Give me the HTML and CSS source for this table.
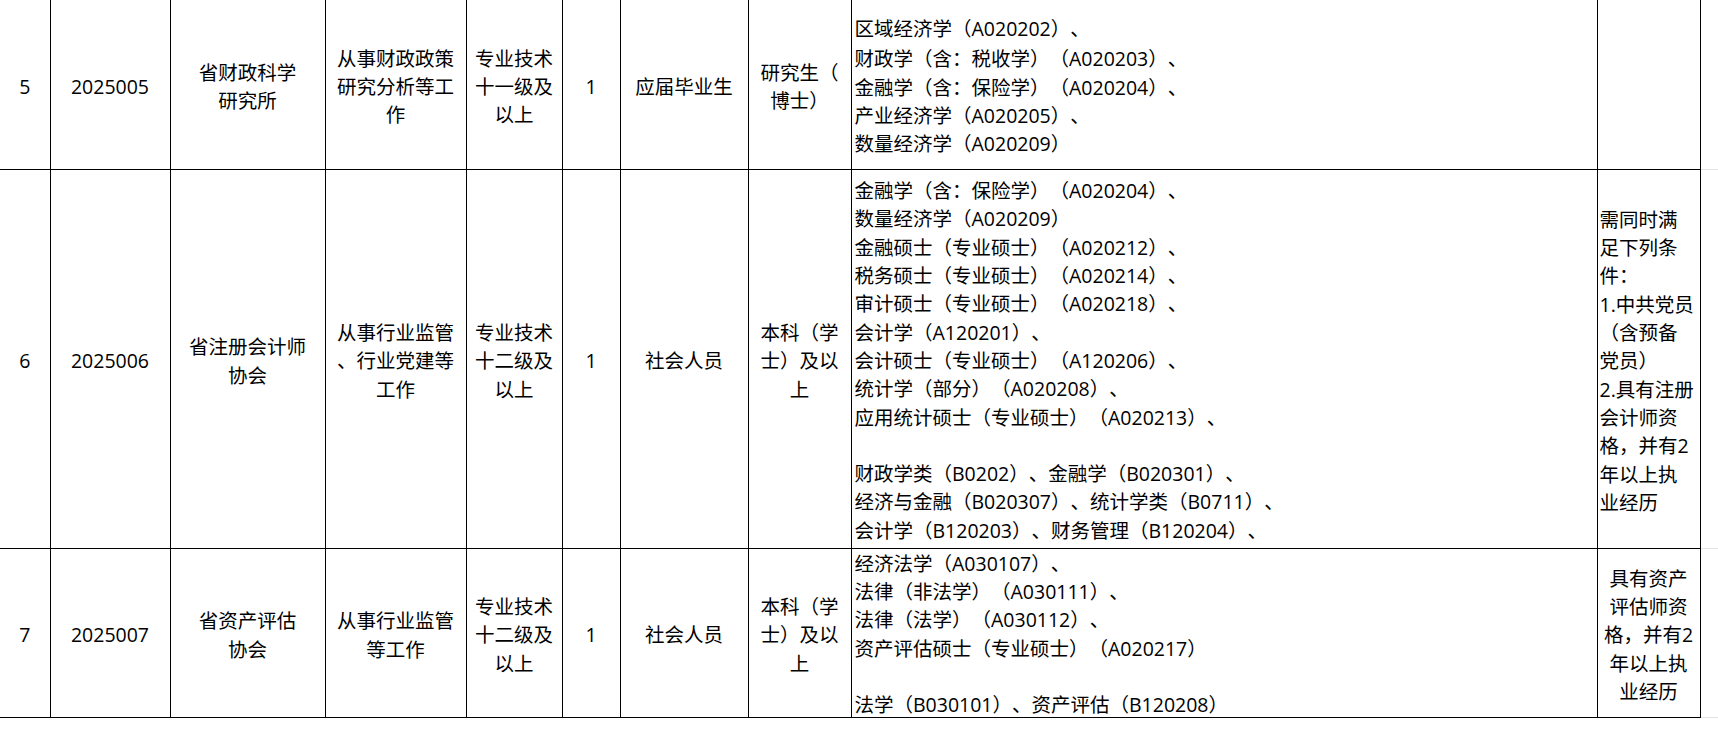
FILE: index.html
```html
<!DOCTYPE html>
<html lang="zh-CN">
<head>
<meta charset="utf-8">
<title>岗位表</title>
<link rel="stylesheet" href="styles.css">
</head>
<body>
<table class="sheet">
  <colgroup>
    <col class="c1"><col class="c2"><col class="c3"><col class="c4"><col class="c5"><col class="c6"><col class="c7"><col class="c8"><col class="c9"><col class="c10"><col class="c11">
  </colgroup>
  <tbody>
    <tr class="r5">
      <td class="ctr first">5</td>
      <td class="ctr">2025005</td>
      <td class="ctr">省财政科学<br>研究所</td>
      <td class="ctr">从事财政政策<br>研究分析等工<br>作</td>
      <td class="ctr">专业技术<br>十一级及<br>以上</td>
      <td class="ctr">1</td>
      <td class="ctr">应届毕业生</td>
      <td class="ctr">研究生（<br>博士）</td>
      <td class="major">区域经济学（A020202）、<br>财政学（含<span class="tc">：</span>税收学）（A020203）、<br>金融学（含<span class="tc">：</span>保险学）（A020204）、<br>产业经济学（A020205）、<br>数量经济学（A020209）</td>
      <td class="note"></td>
      <td class="grid"></td>
    </tr>
    <tr class="r6">
      <td class="ctr first">6</td>
      <td class="ctr">2025006</td>
      <td class="ctr">省注册会计师<br>协会</td>
      <td class="ctr">从事行业监管<br>、行业党建等<br>工作</td>
      <td class="ctr">专业技术<br>十二级及<br>以上</td>
      <td class="ctr">1</td>
      <td class="ctr">社会人员</td>
      <td class="ctr">本科（学<br>士）及以<br>上</td>
      <td class="clipcell"><div class="clip clip-bottom"><div class="lines">财政学（含<span class="tc">：</span>税收学）（A020203）、<br>金融学（含<span class="tc">：</span>保险学）（A020204）、<br>数量经济学（A020209）<br>金融硕士（专业硕士）（A020212）、<br>税务硕士（专业硕士）（A020214）、<br>审计硕士（专业硕士）（A020218）、<br>会计学（A120201）、<br>会计硕士（专业硕士）（A120206）、<br>统计学（部分）（A020208）、<br>应用统计硕士（专业硕士）（A020213）、<br><br>财政学类（B0202）、金融学（B020301）、<br>经济与金融（B020307）、统计学类（B0711）、<br>会计学（B120203）、财务管理（B120204）、</div></div></td>
      <td class="note left">需同时满<br>足下列条<br>件：<br>1.中共党员<br>（含预备<br>党员）<br>2.具有注册<br>会计师资<br>格，并有2<br>年以上执<br>业经历</td>
      <td class="grid"></td>
    </tr>
    <tr class="r7">
      <td class="ctr first">7</td>
      <td class="ctr">2025007</td>
      <td class="ctr">省资产评估<br>协会</td>
      <td class="ctr">从事行业监管<br>等工作</td>
      <td class="ctr">专业技术<br>十二级及<br>以上</td>
      <td class="ctr">1</td>
      <td class="ctr">社会人员</td>
      <td class="ctr">本科（学<br>士）及以<br>上</td>
      <td class="clipcell"><div class="clip clip-center"><div class="lines">经济法学（A030107）、<br>法律（非法学）（A030111）、<br>法律（法学）（A030112）、<br>资产评估硕士（专业硕士）（A020217）<br><br>法学（B030101）、资产评估（B120208）</div></div></td>
      <td class="note ctr">具有资产<br>评估师资<br>格，并有2<br>年以上执<br>业经历</td>
      <td class="grid"></td>
    </tr>
  </tbody>
</table>
</body>
</html>
```

FILE: styles.css
```css
html, body {
  margin: 0;
  padding: 0;
  background: #ffffff;
}

body {
  font-family: "Open Sans", "Noto Sans CJK SC", sans-serif;
  font-size: 19.5px;
  line-height: 28.3px;
  color: #000000;
  overflow: hidden;
  text-spacing-trim: space-all;
}

.tc {
  font-family: "Noto Sans CJK TC", "Noto Sans CJK SC", sans-serif;
}

.sheet {
  border-collapse: collapse;
  table-layout: fixed;
  width: 1718px;
}

.c1 { width: 50px; }
.c2 { width: 120px; }
.c3 { width: 155px; }
.c4 { width: 141px; }
.c5 { width: 96px; }
.c6 { width: 58px; }
.c7 { width: 128px; }
.c8 { width: 103px; }
.c9 { width: 746px; }
.c10 { width: 103px; }
.c11 { width: 18px; }

.sheet td {
  border: 1px solid #000000;
  padding: 5px 2px 0 2px;
  vertical-align: middle;
  white-space: nowrap;
  overflow: hidden;
}

.sheet td.first {
  border-left: none;
}

.r5 td {
  border-top: none;
  height: 164px;
}

.r6 td {
  height: 373px;
}

.r7 td {
  height: 163px;
}

.ctr {
  text-align: center;
}

.sheet td.major {
  text-align: left;
  padding-left: 3px;
}

.note.left {
  text-align: left;
}

.sheet td.clipcell {
  padding: 0;
}

.clip {
  overflow: hidden;
  display: flex;
  flex-direction: column;
  box-sizing: border-box;
  padding-left: 3px;
  text-align: left;
}

.lines {
  flex: none;
}

.clip-bottom {
  height: 378px;
  justify-content: flex-end;
  padding-bottom: 3px;
  border-top: 2px solid #ffffff;
}

.clip-center {
  height: 168px;
  justify-content: center;
  padding-top: 3px;
}

.sheet td.grid {
  border-top-color: #e3e3e3;
  border-bottom-color: #e3e3e3;
  border-right: none;
}
```
